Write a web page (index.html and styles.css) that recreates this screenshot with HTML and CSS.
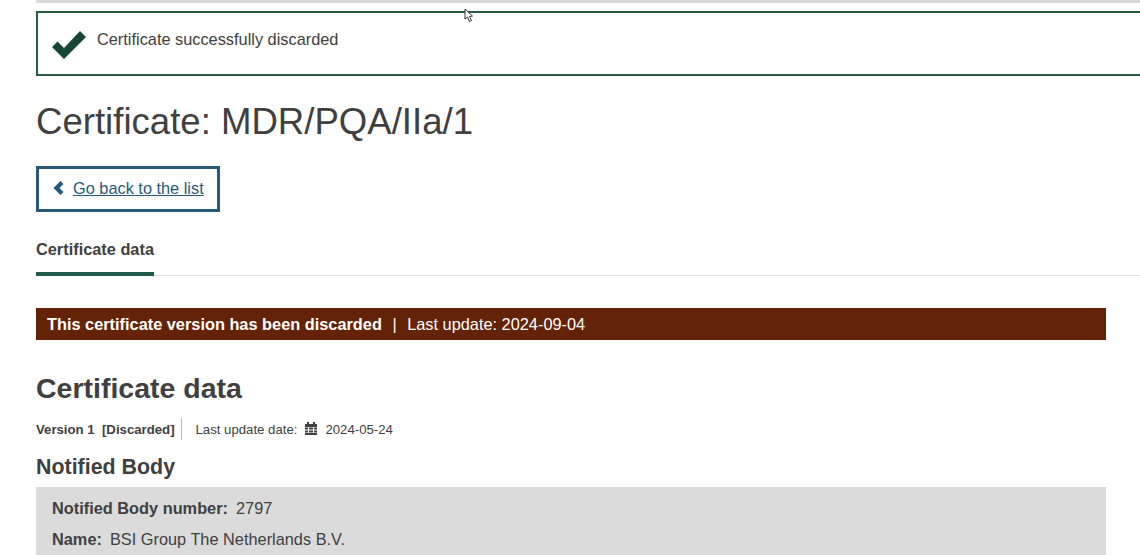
FILE: index.html
```html
<!DOCTYPE html>
<html lang="en">
<head>
    <meta charset="UTF-8">
    <title>Certificate: MDR/PQA/IIa/1</title>
    <link rel="stylesheet" href="styles.css">
</head>
<body>
    <div class="page">
        <div class="top-bar"></div>

        <div class="alert">
            <svg class="alert-icon" viewBox="0 0 34 28" width="34" height="28">
                <path d="M0 16 L5.500 10.500 L12 17 L28 0 L34 6 L12 28 Z"/>
            </svg>
            <span>Certificate successfully discarded</span>
        </div>

        <h1>Certificate: MDR/PQA/IIa/1</h1>

        <div class="back">
            <svg class="back-icon" viewBox="0 0 11 14" width="11" height="14">
                <path d="M7.5 0 L10.5 3 L6.5 7 L10.5 11 L7.5 14 L0.5 7 Z"/>
            </svg>
            <a href="#">Go back to the list</a>
        </div>

        <div class="content">
            <div class="tabs">
                <div class="tab">Certificate data</div>
            </div>

            <div class="status">
                <b>This certificate version has been discarded</b>
                <span class="status-sep">|</span>
                <span>Last update: 2024-09-04</span>
            </div>

            <h2>Certificate data</h2>

            <div class="version">
                <b class="version-name">Version 1 &nbsp;[Discarded]</b>
                <span class="version-date">Last update date:</span>
                <svg class="cal" viewBox="0 0 12 13" width="12" height="13">
                    <path d="M2 0h2v2h4V0h2v2h2v3H0V2h2z"/>
                    <path d="M0 5.500h3v2H0zM4 5.500h4v2H4zM9 5.500h3v2H9zM0 8.500h3v2H0zM4 8.500h4v2H4zM9 8.500h3v2H9zM0 11h12v2H0z"/>
                </svg>
                <span>2024-05-24</span>
            </div>

            <h3>Notified Body</h3>

            <div class="panel">
                <div class="row"><b>Notified Body number:</b><span>2797</span></div>
                <div class="row"><b>Name:</b><span>BSI Group The Netherlands B.V.</span></div>
            </div>
        </div>
    </div>

    <svg class="cursor" viewBox="0 0 10 15" width="10" height="15">
        <path d="M1 1 L1 11 L3.500 9 L5.500 13.500 L7.500 12.500 L5.500 8.500 L8.500 8 Z"/>
    </svg>
</body>
</html>
```

FILE: styles.css
```css
html, body {
    margin: 0;
    height: 555px;
    overflow: hidden;
    background-color: #fff;
}
body {
    font-family: "Liberation Sans", Arial, sans-serif;
    color: #404040;
    font-size: 16.330px;
}
.page {
    padding-left: 36px;
}
.top-bar {
    height: 3px;
    background-color: #d9d9d9;
    margin-bottom: 8px;
}
.alert {
    display: flex;
    align-items: flex-start;
    box-sizing: border-box;
    height: 65px;
    border: 2px solid #265c3f;
    border-right: none;
    padding: 17px 0 0 14px;
}
.alert-icon {
    fill: #154734;
    margin: 1px 11px 0 0;
    flex: none;
}
h1 {
    font-size: 36.600px;
    font-weight: normal;
    line-height: 42px;
    margin: 25px 0 23px;
}
.back {
    display: inline-flex;
    align-items: center;
    box-sizing: border-box;
    height: 46px;
    width: 184px;
    border: 3px solid #255a7a;
    padding: 0 0 2px 14px;
}
.back-icon {
    fill: #255a7a;
    margin: -1px 9px 0 0;
}
.back a {
    color: #255a7a;
}
.content {
    width: 1070px;
}
.tabs {
    width: 1104px;
    margin-top: 15px;
    border-bottom: 1px solid #e3e3e3;
    height: 48px;
}
.tab {
    display: inline-block;
    box-sizing: border-box;
    height: 49px;
    padding-top: 13px;
    font-weight: bold;
    border-bottom: 4px solid #1f5c4d;
}
.status {
    margin-top: 32px;
    height: 32px;
    line-height: 32px;
    box-sizing: border-box;
    padding-left: 11px;
    background-color: #642207;
    color: #fff;
}
.status-sep {
    margin: 0 6px;
}
h2 {
    font-size: 28.500px;
    line-height: 32px;
    margin: 32px 0 0;
}
.version {
    display: flex;
    align-items: center;
    font-size: 13.200px;
    height: 22px;
    margin-top: 14px;
}
.version-name {
    border-right: 1px solid #bbb;
    padding: 1px 6px 0 0;
    line-height: 21px;
    margin-right: 14px;
}
.cal {
    fill: #404040;
    margin: -2px 8px 0 8px;
}
h3 {
    font-size: 21.400px;
    line-height: 26px;
    margin: 14px 0 7px;
}
.panel {
    box-sizing: border-box;
    background-color: #dbdbdb;
    padding: 11px 16px 0;
    height: 68px;
}
.row {
    display: flex;
    gap: 8px;
    line-height: 21px;
    margin-bottom: 10px;
}
.cursor {
    position: absolute;
    left: 464px;
    top: 8px;
    fill: #fff;
    stroke: #333;
    stroke-width: 1;
}
```
